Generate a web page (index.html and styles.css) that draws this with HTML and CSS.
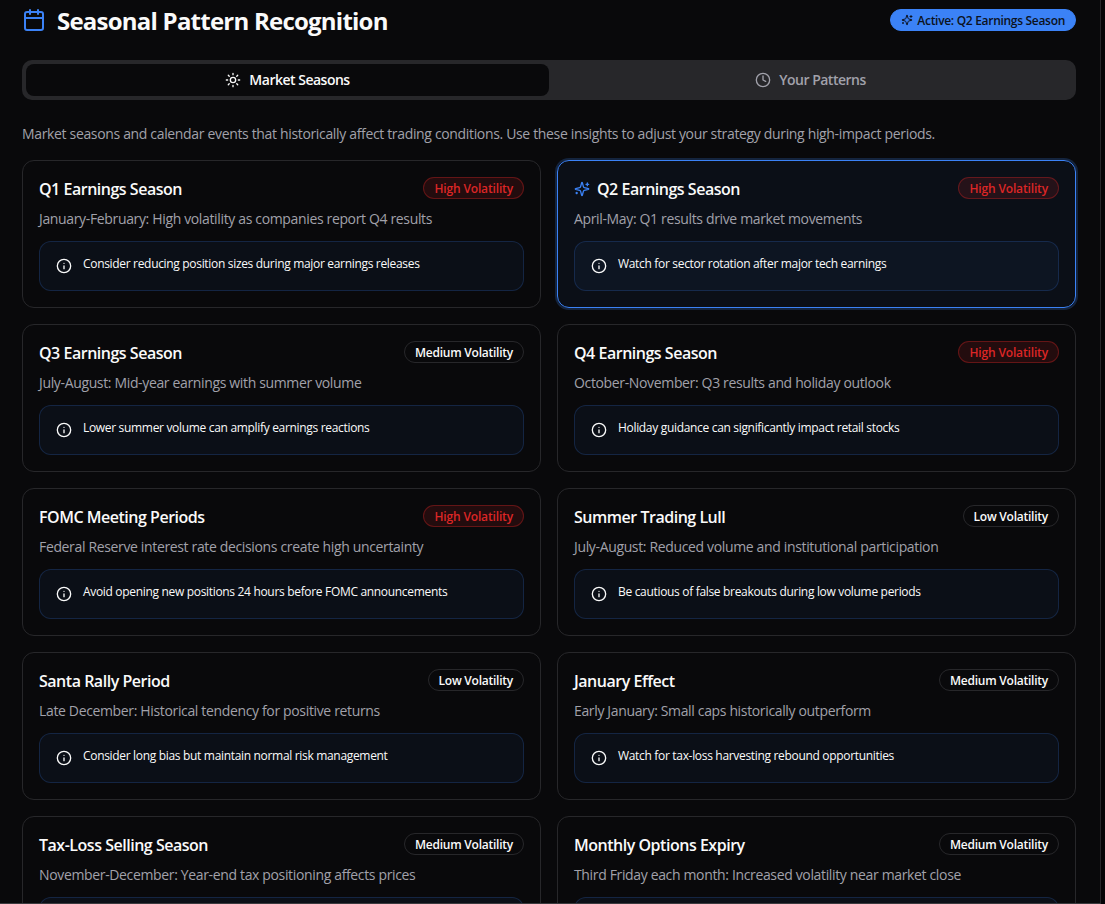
FILE: index.html
```html
<!DOCTYPE html>
<html lang="en">
<head>
    <meta charset="UTF-8">
    <meta name="viewport" content="width=device-width, initial-scale=1.0">
    <title>Seasonal Pattern Recognition</title>
    <link rel="stylesheet" href="styles.css">
</head>
<body>

<!-- icon set -->
<svg class="icon-defs" width="0" height="0">
    <symbol id="calendar" viewBox="0 0 24 24">
        <path d="M8 2v4M16 2v4M3 10h18"/>
        <rect x="3" y="4" width="18" height="18" rx="2"/>
    </symbol>
    <symbol id="sparkles" viewBox="0 0 24 24">
        <path d="M9.937 15.5A2 2 0 0 0 8.5 14.063l-6.135-1.582a.5.5 0 0 1 0-.962L8.5 9.936A2 2 0 0 0 9.937 8.5l1.582-6.135a.5.5 0 0 1 .963 0L14.063 8.5A2 2 0 0 0 15.5 9.937l6.135 1.581a.5.5 0 0 1 0 .964L15.5 14.063a2 2 0 0 0-1.437 1.437l-1.582 6.135a.5.5 0 0 1-.963 0z"/>
        <path d="M20 3v4M22 5h-4M4 17v2M5 18H3"/>
    </symbol>
    <symbol id="sun" viewBox="0 0 24 24">
        <circle cx="12" cy="12" r="4"/>
        <path d="M12 2v2M12 20v2M4.93 4.93l1.41 1.41M17.66 17.66l1.41 1.41M2 12h2M20 12h2M6.34 17.66l-1.41 1.41M19.07 4.93l-1.41 1.41"/>
    </symbol>
    <symbol id="clock" viewBox="0 0 24 24">
        <circle cx="12" cy="12" r="10"/>
        <path d="M12 6v6l4 2"/>
    </symbol>
    <symbol id="info" viewBox="0 0 24 24">
        <circle cx="12" cy="12" r="10"/>
        <path d="M12 16v-4M12 8h.01"/>
    </symbol>
</svg>

<main class="panel">
    <header class="header">
        <svg class="icon icon-lg"><use href="#calendar"/></svg>
        <h1>Seasonal Pattern Recognition</h1>
        <span class="badge badge-active"><svg class="icon icon-sm"><use href="#sparkles"/></svg>Active: Q2 Earnings Season</span>
    </header>

    <div class="tabs">
        <button class="tab selected"><svg class="icon"><use href="#sun"/></svg>Market Seasons</button>
        <button class="tab"><svg class="icon"><use href="#clock"/></svg>Your Patterns</button>
    </div>

    <p class="intro">Market seasons and calendar events that historically affect trading conditions. Use these insights to adjust your strategy during high-impact periods.</p>

    <div class="grid">
        <section class="card">
            <div class="card-head"><h2>Q1 Earnings Season</h2><span class="badge high">High Volatility</span></div>
            <p class="desc">January-February: High volatility as companies report Q4 results</p>
            <div class="tip"><svg class="icon"><use href="#info"/></svg><span>Consider reducing position sizes during major earnings releases</span></div>
        </section>

        <section class="card current">
            <div class="card-head"><svg class="icon"><use href="#sparkles"/></svg><h2>Q2 Earnings Season</h2><span class="badge high">High Volatility</span></div>
            <p class="desc">April-May: Q1 results drive market movements</p>
            <div class="tip"><svg class="icon"><use href="#info"/></svg><span>Watch for sector rotation after major tech earnings</span></div>
        </section>

        <section class="card">
            <div class="card-head"><h2>Q3 Earnings Season</h2><span class="badge">Medium Volatility</span></div>
            <p class="desc">July-August: Mid-year earnings with summer volume</p>
            <div class="tip"><svg class="icon"><use href="#info"/></svg><span>Lower summer volume can amplify earnings reactions</span></div>
        </section>

        <section class="card">
            <div class="card-head"><h2>Q4 Earnings Season</h2><span class="badge high">High Volatility</span></div>
            <p class="desc">October-November: Q3 results and holiday outlook</p>
            <div class="tip"><svg class="icon"><use href="#info"/></svg><span>Holiday guidance can significantly impact retail stocks</span></div>
        </section>

        <section class="card">
            <div class="card-head"><h2>FOMC Meeting Periods</h2><span class="badge high">High Volatility</span></div>
            <p class="desc">Federal Reserve interest rate decisions create high uncertainty</p>
            <div class="tip"><svg class="icon"><use href="#info"/></svg><span>Avoid opening new positions 24 hours before FOMC announcements</span></div>
        </section>

        <section class="card">
            <div class="card-head"><h2>Summer Trading Lull</h2><span class="badge">Low Volatility</span></div>
            <p class="desc">July-August: Reduced volume and institutional participation</p>
            <div class="tip"><svg class="icon"><use href="#info"/></svg><span>Be cautious of false breakouts during low volume periods</span></div>
        </section>

        <section class="card">
            <div class="card-head"><h2>Santa Rally Period</h2><span class="badge">Low Volatility</span></div>
            <p class="desc">Late December: Historical tendency for positive returns</p>
            <div class="tip"><svg class="icon"><use href="#info"/></svg><span>Consider long bias but maintain normal risk management</span></div>
        </section>

        <section class="card">
            <div class="card-head"><h2>January Effect</h2><span class="badge">Medium Volatility</span></div>
            <p class="desc">Early January: Small caps historically outperform</p>
            <div class="tip"><svg class="icon"><use href="#info"/></svg><span>Watch for tax-loss harvesting rebound opportunities</span></div>
        </section>

        <section class="card">
            <div class="card-head"><h2>Tax-Loss Selling Season</h2><span class="badge">Medium Volatility</span></div>
            <p class="desc">November-December: Year-end tax positioning affects prices</p>
            <div class="tip"></div>
        </section>

        <section class="card">
            <div class="card-head"><h2>Monthly Options Expiry</h2><span class="badge">Medium Volatility</span></div>
            <p class="desc">Third Friday each month: Increased volatility near market close</p>
            <div class="tip"></div>
        </section>
    </div>
</main>

</body>
</html>
```

FILE: styles.css
```css
* {
    box-sizing: border-box;
}

body {
    margin: 0;
    height: 904px;
    overflow: hidden;
    background-color: #050507;
    color: #fafafa;
    font-family: "Segoe UI", "Open Sans", "Noto Sans", sans-serif;
    font-size: 14px;
    line-height: 20px;
}

h1, h2, p {
    margin: 0;
}

.icon-defs {
    position: absolute;
}

.icon {
    width: 16px;
    height: 16px;
    flex: none;
    fill: none;
    stroke: currentColor;
    stroke-width: 2;
    stroke-linecap: round;
    stroke-linejoin: round;
}

.icon-lg {
    width: 24px;
    height: 24px;
    color: #3b82f6;
}

.icon-sm {
    width: 12px;
    height: 12px;
    margin: -1px 4px 0 0;
}

.panel {
    width: 1101px;
    height: 904px;
    overflow: hidden;
    padding: 4px 24px 0 22px;
    border-right: 1px solid #27272a;
    border-bottom: 1px solid #3a3a3e;
    background-color: #09090b;
}

/* Header */
.header {
    display: flex;
    align-items: center;
    height: 32px;
}

.header h1 {
    margin-left: 11px;
    padding-top: 2px;
    font-size: 24px;
    line-height: 32px;
    font-weight: 700;
    letter-spacing: -0.77px;
}

.badge {
    display: flex;
    align-items: center;
    flex: none;
    height: 22px;
    margin-left: auto;
    padding: 1px 10px 0;
    border: 1px solid #27272a;
    border-radius: 11px;
    font-size: 12px;
    line-height: 16px;
    font-weight: 600;
    letter-spacing: -0.24px;
    white-space: nowrap;
}

.badge-active {
    background-color: #3b82f6;
    border-color: #3b82f6;
    color: #0c1220;
    letter-spacing: -0.3px;
}

.high {
    color: #dc2626;
    background-color: rgba(220, 38, 38, 0.13);
    border-color: rgba(220, 38, 38, 0.35);
    letter-spacing: -0.15px;
}

/* Tabs */
.tabs {
    display: flex;
    height: 40px;
    margin-top: 24px;
    padding: 4px;
    border-radius: 10px;
    background-color: #27272a;
}

.tab {
    display: flex;
    flex: 1;
    align-items: center;
    justify-content: center;
    gap: 8px;
    padding: 0;
    border: none;
    border-radius: 8px;
    background: none;
    color: #a1a1aa;
    font: inherit;
    font-weight: 600;
    letter-spacing: -0.5px;
}

.selected {
    background-color: #09090b;
    color: #fafafa;
}

.intro {
    margin-top: 24px;
    color: #a1a1aa;
    white-space: nowrap;
    letter-spacing: -0.34px;
}

/* Season cards */
.grid {
    display: grid;
    grid-template-columns: 1fr 1fr;
    gap: 16px;
    margin-top: 16px;
}

.card {
    height: 148px;
    padding: 16px;
    border: 1px solid #27272a;
    border-radius: 12px;
}

.current {
    border-color: #3b82f6;
    background-color: rgba(59, 130, 246, 0.05);
    box-shadow: 0 0 0 2px rgba(59, 130, 246, 0.22);
}

.card-head {
    display: flex;
    height: 24px;
}

.card-head .icon {
    margin: 4px 7px 0 0;
    color: #3b82f6;
}

.card-head h2 {
    font-size: 16px;
    line-height: 24px;
    font-weight: 600;
    letter-spacing: -0.48px;
}

.desc {
    margin-top: 8px;
    color: #a1a1aa;
    letter-spacing: -0.35px;
    white-space: nowrap;
}

.tip {
    display: flex;
    gap: 11px;
    height: 50px;
    margin-top: 12px;
    padding: 16px;
    border: 1px solid rgba(59, 130, 246, 0.2);
    border-radius: 12px;
    background-color: rgba(59, 130, 246, 0.05);
    font-size: 12px;
    line-height: 16px;
    letter-spacing: -0.32px;
    white-space: nowrap;
}

.tip span {
    margin-top: -2px;
}
```
